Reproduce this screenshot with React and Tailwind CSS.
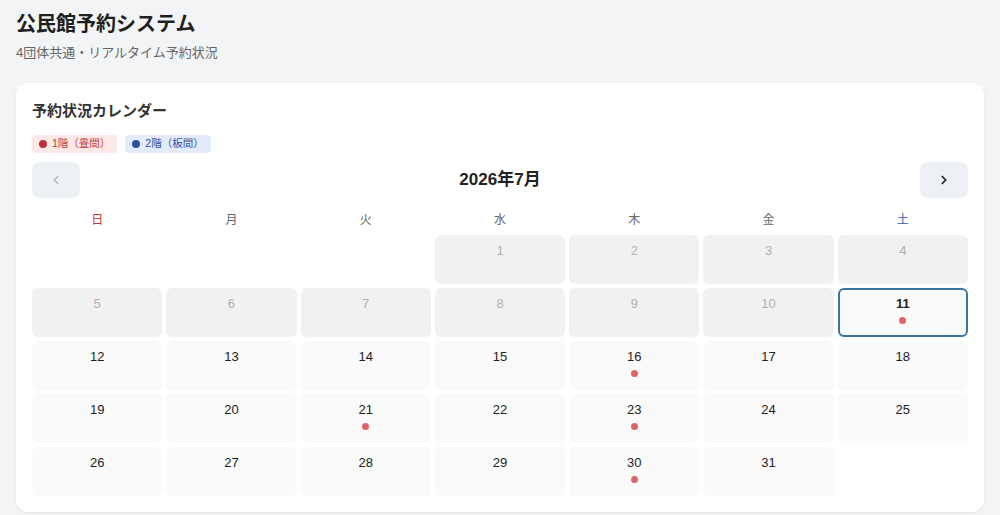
import { ChevronLeft, ChevronRight } from "lucide-react";

const weekdays = [
  { label: "日", color: "text-[#c0392b]" },
  { label: "月", color: "text-[#666]" },
  { label: "火", color: "text-[#666]" },
  { label: "水", color: "text-[#666]" },
  { label: "木", color: "text-[#666]" },
  { label: "金", color: "text-[#666]" },
  { label: "土", color: "text-[#2f5fb0]" },
];

// July 2026 starts on Wednesday
const firstOffset = 3;
const daysInMonth = 31;
const today = 11;
const reserved = [11, 16, 21, 23, 30];

export default function App() {
  const cells = [];
  for (let i = 0; i < firstOffset; i++) cells.push(null);
  for (let d = 1; d <= daysInMonth; d++) cells.push(d);

  return (
    <div
      className="min-h-screen bg-[#f3f4f6] px-4 pt-2.5 pb-4 text-[#222]"
      style={{ fontFamily: '"Liberation Sans", "Noto Sans CJK JP", sans-serif' }}
    >
      <h1 className="text-xl font-bold leading-7 text-[#1f1f1f]">公民館予約システム</h1>
      <p className="mt-[7px] text-[13px] leading-4 text-[#666]">4団体共通・リアルタイム予約状況</p>

      <div className="mt-[22px] rounded-xl bg-white p-4 shadow-[0_1px_3px_rgba(0,0,0,0.08)]">
        <h2 className="text-[15px] font-bold leading-6 text-[#333]">予約状況カレンダー</h2>

        {/* legend */}
        <div className="mt-3 flex gap-2">
          <span className="flex h-[18px] items-center gap-[5px] rounded bg-[#fde8e8] px-[7px] text-[10.5px] text-[#c03a3a]">
            <span className="h-2 w-2 rounded-full bg-[#b83232]" />
            1階（畳間）
          </span>
          <span className="flex h-[18px] items-center gap-[5px] rounded bg-[#e3ebfb] px-[7px] text-[10.5px] text-[#2f4fa0]">
            <span className="h-2 w-2 rounded-full bg-[#2f4fa0]" />
            2階（板間）
          </span>
        </div>

        {/* month nav */}
        <div className="mt-[9px] mb-[10px] flex items-center justify-between">
          <button className="flex h-9 w-12 items-center justify-center rounded-lg bg-[#edf0f5] text-[#bbb]">
            <ChevronLeft size={14} strokeWidth={3} />
          </button>
          <div className="text-[17px] font-bold text-[#222]">2026年7月</div>
          <button className="flex h-9 w-12 items-center justify-center rounded-lg bg-[#edf0f5] text-[#222]">
            <ChevronRight size={14} strokeWidth={3} />
          </button>
        </div>

        {/* weekday header */}
        <div className="mb-[3px] grid grid-cols-7 gap-1">
          {weekdays.map((w) => (
            <div key={w.label} className={`flex h-6 items-center justify-center text-[12px] ${w.color}`}>
              {w.label}
            </div>
          ))}
        </div>

        {/* days */}
        <div className="grid grid-cols-7 gap-1">
          {cells.map((d, i) => {
            if (d === null) return <div key={"e" + i} className="h-[49px]" />;
            const past = d < today;
            const isToday = d === today;
            return (
              <div
                key={d}
                className={`flex h-[49px] flex-col items-center rounded-md ${
                  isToday
                    ? "border-2 border-[#3a76a0] bg-[#fafafa] pt-[6px]"
                    : past
                    ? "bg-[#f1f1f1] pt-[8px]"
                    : "bg-[#fafafa] pt-[8px]"
                }`}
              >
                <span
                  className={`text-[13px] leading-4 ${
                    isToday ? "font-bold text-[#222]" : past ? "text-[#b0b0b0]" : "text-[#222]"
                  }`}
                >
                  {d}
                </span>
                {reserved.includes(d) && (
                  <span className="mt-[5px] h-[7px] w-[7px] rounded-full bg-[#e06464]" />
                )}
              </div>
            );
          })}
        </div>
      </div>
    </div>
  );
}
